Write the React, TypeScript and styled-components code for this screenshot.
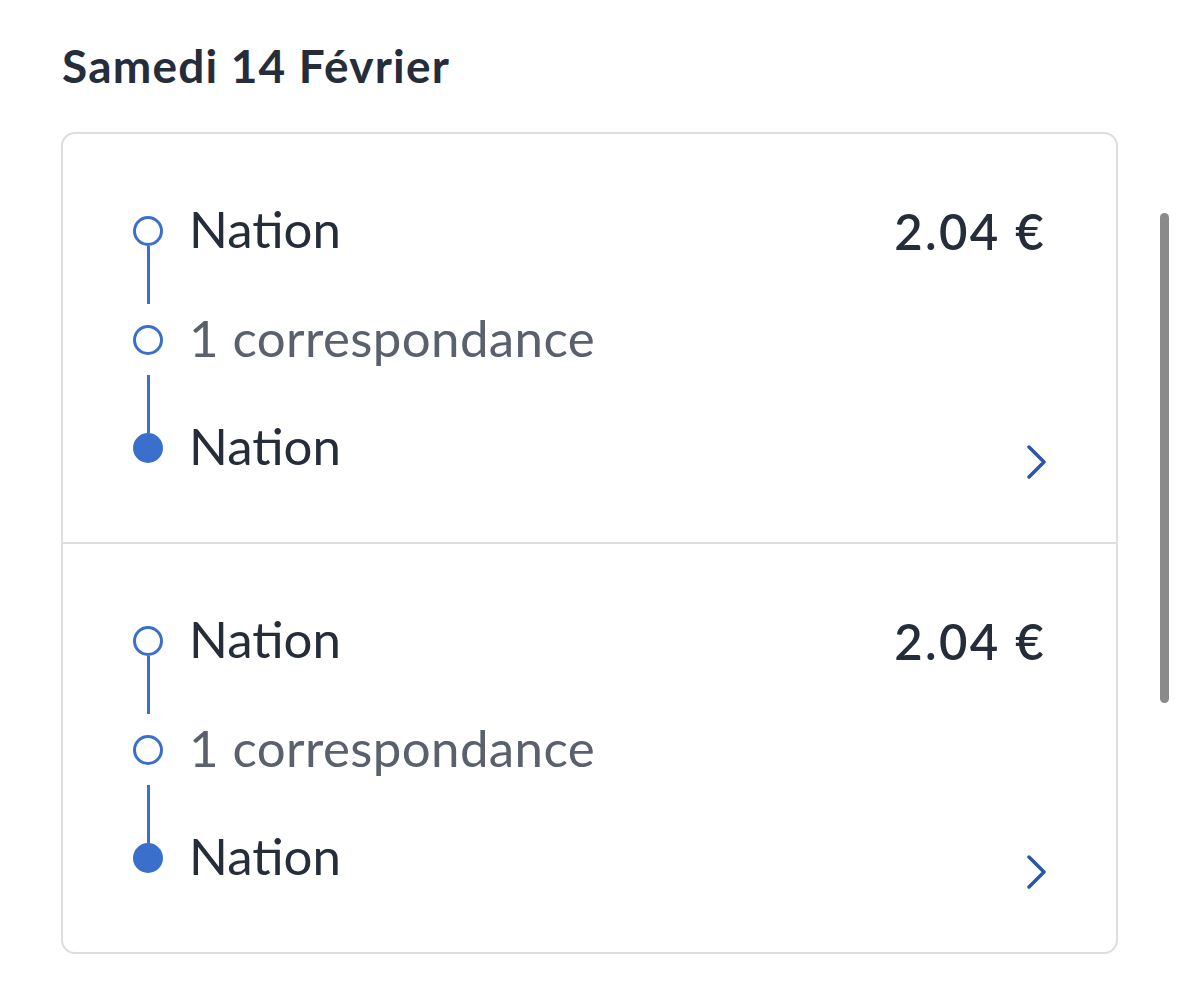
import React from "react";
import styled, { createGlobalStyle } from "styled-components";

const GlobalStyle = createGlobalStyle`
  body {
    margin: 0;
    background: #ffffff;
    font-family: Lato, "Open Sans", sans-serif;
  }
`;

const Page = styled.div({
  position: "relative",
  padding: "38px 61px 0 61px",
  width: "1057px",
});

const DayTitle = styled.h2({
  margin: "0 0 38px 1px",
  fontSize: "46px",
  fontWeight: 700,
  color: "#262d3a",
  lineHeight: "56px",
  letterSpacing: "1.2px",
});

const Card = styled.div({
  border: "2px solid #dedede",
  borderRadius: "14px",
  overflow: "hidden",
});

const Trip = styled.div({
  display: "flex",
  justifyContent: "space-between",
  padding: "82px 72px 79px 70px",
  "& + &": {
    borderTop: "2px solid #dedede",
  },
});

const Route = styled.div({
  display: "flex",
  flexDirection: "column",
});

const StopRow = styled.div({
  display: "flex",
  alignItems: "center",
  height: "30px",
  gap: "26px",
});

const Dot = styled.span<{ $filled?: boolean }>((p) => ({
  boxSizing: "border-box",
  width: "30px",
  height: "30px",
  flex: "none",
  borderRadius: "50%",
  border: "3px solid #3a70cc",
  background: p.$filled ? "#3a70cc" : "#ffffff",
}));

const Label = styled.span<{ $muted?: boolean }>((p) => ({
  fontSize: "51px",
  fontWeight: 400,
  color: p.$muted ? "#5a616d" : "#262d3a",
  lineHeight: "30px",
  whiteSpace: "nowrap",
  letterSpacing: p.$muted ? "0.4px" : "0",
  marginTop: "-4px",
}));

const Link = styled.div<{ $attach: "top" | "bottom" }>((p) => ({
  display: "flex",
  flexDirection: "column",
  justifyContent: p.$attach === "top" ? "flex-start" : "flex-end",
  width: "30px",
  height: p.$attach === "top" ? "79px" : "78px",
}));

const Line = styled.span({
  alignSelf: "center",
  width: "3px",
  height: "58px",
  background: "#3a70cc",
});

const Side = styled.div({
  display: "flex",
  flexDirection: "column",
  justifyContent: "space-between",
  alignItems: "flex-end",
});

const Price = styled.span({
  fontSize: "49px",
  fontWeight: 600,
  color: "#262d3a",
  lineHeight: "30px",
  letterSpacing: "2.4px",
  marginRight: "-2px",
});

const Chevron = styled.svg({
  display: "block",
  marginRight: "-4px",
  marginBottom: "-16px",
});

const ScrollThumb = styled.div({
  position: "absolute",
  left: "1160px",
  top: "213px",
  width: "9px",
  height: "490px",
  borderRadius: "5px",
  background: "#8a8a8a",
});

const TripItem = () => (
  <Trip>
    <Route>
      <StopRow>
        <Dot />
        <Label>Nation</Label>
      </StopRow>
      <Link $attach="top">
        <Line />
      </Link>
      <StopRow>
        <Dot />
        <Label $muted>1 correspondance</Label>
      </StopRow>
      <Link $attach="bottom">
        <Line />
      </Link>
      <StopRow>
        <Dot $filled />
        <Label>Nation</Label>
      </StopRow>
    </Route>
    <Side>
      <Price>2.04 €</Price>
      <Chevron width="22" height="34" viewBox="0 0 22 34">
        <polyline
          points="3,2 18,17 3,32"
          fill="none"
          stroke="#2b56a8"
          strokeWidth="3.5"
          strokeLinecap="round"
          strokeLinejoin="round"
        />
      </Chevron>
    </Side>
  </Trip>
);

export default function App() {
  return (
    <>
      <GlobalStyle />
      <Page>
        <DayTitle>Samedi 14 Février</DayTitle>
        <Card>
          <TripItem />
          <TripItem />
        </Card>
        <ScrollThumb />
      </Page>
    </>
  );
}
